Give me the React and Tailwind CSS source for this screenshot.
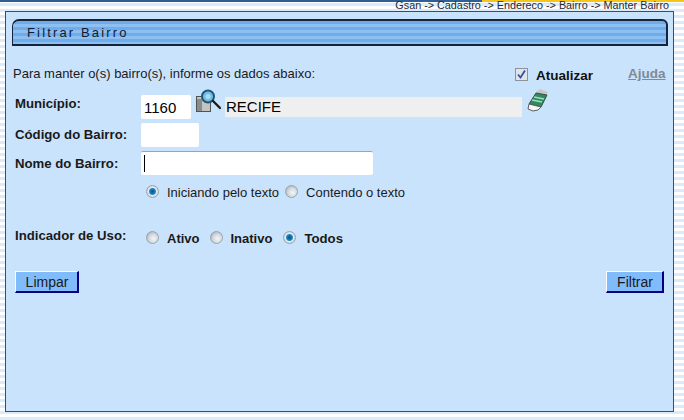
import React from 'react';

const stripes = 'bg-[repeating-linear-gradient(180deg,#ffffff_0px,#ffffff_3px,#dbebf9_3px,#dbebf9_6px)]';

const Radio = ({ checked }) => (
  <span
    className={`inline-block w-[13px] h-[13px] rounded-full border border-[#9aa3ab] ${
      checked
        ? 'bg-[radial-gradient(circle,#0b4f86_0px,#1b8ac6_3px,#e9eef1_4px,#c4cbd1_6px)]'
        : 'bg-[radial-gradient(circle_at_60%_60%,#f4f6f7_0px,#d8dde1_4px,#b4bcc3_7px)]'
    }`}
  />
);

const LupaIcon = () => (
  <svg width="25" height="24" viewBox="0 0 25 24" className="block">
    <rect x="0.5" y="7.5" width="14" height="15" fill="#c4c4c0" stroke="#4f5356" />
    <rect x="1" y="10" width="5" height="12" fill="#8a8c8b" />
    <circle cx="12" cy="7.5" r="6" fill="#74bde2" stroke="#1f5678" strokeWidth="2" />
    <circle cx="12" cy="7.5" r="2.5" fill="#a8dcf2" />
    <path d="M17 12 L24 19" stroke="#1c1c1c" strokeWidth="2.4" strokeLinecap="round" />
  </svg>
);

const BorrachaIcon = () => (
  <svg width="21" height="23" viewBox="0 0 21 23" className="block">
    <path d="M9 3 L13 0 L21 3 L19 7 L10 5 Z" fill="#c6c8c8" />
    <path d="M2 15 L9 4 L20 6 L14 18 Z" fill="#2f8a62" stroke="#3d4a44" />
    <path d="M7 8 L17 10 M5 11 L15 13" stroke="#9fdcbc" strokeWidth="1.5" />
    <path d="M2 15 L14 18 L11 21 L6 22 L1 20 Z" fill="#f6f6f6" stroke="#5a5f5c" />
  </svg>
);

const Button = ({ children, className }) => (
  <button className={`h-[22px] bg-[#80bcfb] border border-t-white border-l-white border-r-[#000080] border-b-[#000080] border-r-2 border-b-2 text-[14px] leading-none text-[#1a1a1a] ${className}`}>
    {children}
  </button>
);

const App = () => {
  return (
    <div className={`w-[684px] h-[420px] overflow-hidden font-['Liberation_Sans',Arial,sans-serif] ${stripes}`}>
      <div className="h-[2px] flex">
        <div className="w-[482px] bg-[#2f5f95]" />
        <div className="flex-1 bg-[#f5c518]" />
      </div>
      {/* Breadcrumb */}
      <div className="h-[9px] flex justify-end pr-[15px] text-[10.8px] leading-[7px] text-[#1c2a36]">
        <span>Gsan -&gt; Cadastro -&gt; Endereco -&gt; Bairro -&gt; Manter Bairro</span>
      </div>

      {/* Panel */}
      <div className="ml-[5px] w-[669px] h-[401px] border border-[#2f5070] bg-[#cae3fd] pl-[6px] pt-[7px]">
        {/* Title bar */}
        <div className="w-[656px] h-[27px] border-2 border-l border-[#14243a] rounded-tl-[7px] rounded-tr-[6px] bg-[repeating-linear-gradient(180deg,#72ace8_0px,#72ace8_3px,#8cc0f2_3px,#8cc0f2_6px)] pl-[14px] flex items-center">
          <span className="text-[13px] tracking-[2.15px] text-[#111a30]">Filtrar Bairro</span>
        </div>

        {/* Top line */}
        <div className="mt-[19px] h-[18px] flex items-center text-[13px] text-[#1a1a1a] pl-[1px]">
          <span>Para manter o(s) bairro(s), informe os dados abaixo:</span>
          <span className="ml-[200px] w-[13px] h-[13px] border border-[#8b929a] bg-[#dfe4ea] flex items-center justify-center">
            <svg width="11" height="11" viewBox="0 0 11 11">
              <path d="M2 5.5 L4.5 8.5 L9 1.5" fill="none" stroke="#3a4f9e" strokeWidth="1.8" />
            </svg>
          </span>
          <span className="ml-[8px] mt-[4px] text-[13.5px] font-bold text-[#111]">Atualizar</span>
          <span className="ml-[35px] text-[13.5px] font-bold text-[#7f8a96] underline">Ajuda</span>
        </div>

        {/* Municipio */}
        <div className="mt-[6px] flex items-start pl-[3px] h-[34px]">
          <span className="w-[126px] mt-[5px] text-[13.2px] font-bold text-[#1a1a1a]">Município:</span>
          <input readOnly value="1160" className="w-[50px] h-[24px] mt-[6px] bg-white rounded-[2px] px-[3px] text-[15px] text-black outline-none" />
          <span className="ml-[5px] w-[25px] shrink-0"><LupaIcon /></span>
          <input readOnly value="RECIFE" className="w-[297px] h-[20px] mt-[8px] ml-[4px] bg-[#efefef] px-[1px] text-[15px] text-black outline-none" />
          <span className="ml-[5px]"><BorrachaIcon /></span>
        </div>

        {/* Codigo */}
        <div className="flex items-start pl-[3px] h-[28px]">
          <span className="w-[126px] mt-[2px] text-[13.2px] font-bold text-[#1a1a1a]">Código do Bairro:</span>
          <input readOnly className="w-[58px] h-[24px] bg-white rounded-[2px] outline-none" />
        </div>

        {/* Nome */}
        <div className="flex items-start pl-[3px] h-[24px]">
          <span className="w-[126px] mt-[3px] text-[13.2px] font-bold text-[#1a1a1a]">Nome do Bairro:</span>
          <div className="w-[232px] h-[24px] bg-white rounded-[2px] border-t border-t-[#9aa5ae] flex items-center pl-[3px]">
            <span className="w-[1px] h-[17px] bg-black" />
          </div>
        </div>

        {/* Tipo de pesquisa */}
        <div className="mt-[6px] pl-[134px] h-[20px] flex items-center text-[13px] text-[#1a1a1a]">
          <Radio checked />
          <span className="ml-[8px] mt-[3px]">Iniciando pelo texto</span>
          <span className="ml-[6px] flex"><Radio /></span>
          <span className="ml-[8px] mt-[3px]">Contendo o texto</span>
        </div>

        {/* Indicador */}
        <div className="mt-[28px] flex items-center pl-[3px] h-[20px]">
          <span className="w-[131px] -mt-[7px] text-[13.2px] font-bold text-[#1a1a1a]">Indicador de Uso:</span>
          <span className="flex -mt-[4px]"><Radio /></span>
          <span className="ml-[8px] text-[13px] font-bold text-[#1a1a1a]">Ativo</span>
          <span className="ml-[10px] flex -mt-[4px]"><Radio /></span>
          <span className="ml-[8px] text-[13px] font-bold text-[#1a1a1a]">Inativo</span>
          <span className="ml-[11px] flex -mt-[4px]"><Radio checked /></span>
          <span className="ml-[8px] text-[13.2px] font-bold text-[#1a1a1a]">Todos</span>
        </div>

        {/* Botoes */}
        <div className="mt-[22px] flex justify-between pl-[3px] w-[652px]">
          <Button className="w-[64px] pl-[1px]">Limpar</Button>
          <Button className="w-[58px] pl-[1px]">Filtrar</Button>
        </div>
      </div>
    </div>
  );
};

export default App;
